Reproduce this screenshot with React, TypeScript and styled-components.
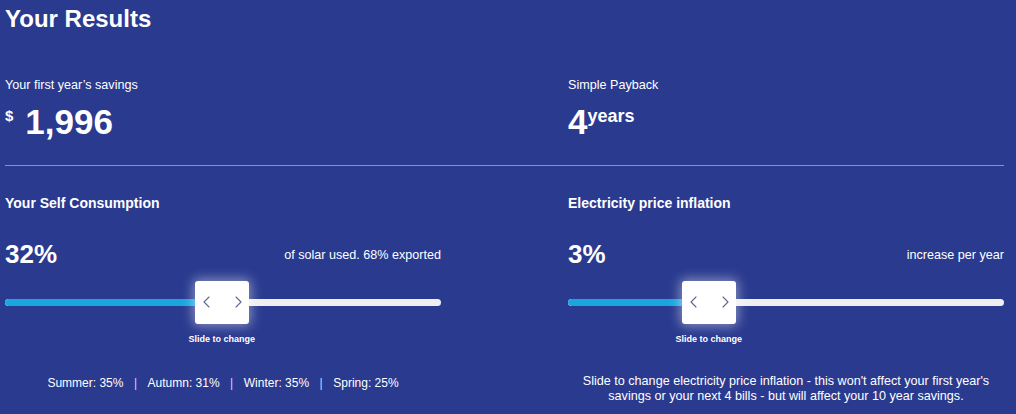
import React from "react";
import styled, { createGlobalStyle } from "styled-components";

const GlobalStyle = createGlobalStyle`
  html, body {
    margin: 0;
    padding: 0;
    background: #2a3a8f;
  }
  body {
    font-family: "Liberation Sans", Arial, sans-serif;
    color: #ffffff;
  }
`;

const Page = styled.div`
  width: 999px;
  padding: 5px 12px 0 5px;
  background: #2a3a8f;
  min-height: 409px;
`;

const Title = styled.h1`
  margin: 0;
  font-size: 24px;
  line-height: 28px;
  font-weight: 700;
`;

const Columns = styled.div<{ $top?: number }>`
  display: grid;
  grid-template-columns: 436px 436px;
  column-gap: 127px;
  margin-top: ${(p) => p.$top ?? 0}px;
`;

const Column = styled.div`
  display: flex;
  flex-direction: column;
`;

const StatLabel = styled.div`
  font-size: 12.6px;
  line-height: 15px;
`;

const StatValueRow = styled.div`
  display: flex;
  align-items: flex-start;
  margin-top: 11px;
`;

const Currency = styled.span`
  font-size: 15px;
  line-height: 15px;
  font-weight: 700;
  margin-top: 4px;
  margin-right: 12px;
`;

const BigNumber = styled.span`
  font-size: 35px;
  line-height: 35px;
  font-weight: 700;
`;

const Unit = styled.span`
  font-size: 18px;
  line-height: 18px;
  font-weight: 700;
  margin-top: 3px;
`;

const Divider = styled.hr`
  margin: 26px 0 0 0;
  border: 0;
  height: 1px;
  background: #8390d2;
  width: 999px;
`;

const SectionHeading = styled.h2`
  margin: 0;
  font-size: 14px;
  line-height: 16px;
  font-weight: 700;
`;

const ValueRow = styled.div`
  display: flex;
  justify-content: space-between;
  align-items: flex-end;
  margin-top: 28px;
`;

const Percent = styled.span`
  font-size: 26px;
  line-height: 30px;
  font-weight: 700;
`;

const ValueNote = styled.span`
  font-size: 12.6px;
  line-height: 15px;
  margin-bottom: 6px;
`;

const SliderArea = styled.div`
  position: relative;
  margin-top: 12px;
  height: 64px;
`;

const Track = styled.div`
  position: absolute;
  left: 0;
  right: 0;
  top: 18px;
  height: 7px;
  border-radius: 4px;
  background: #efeff1;
  overflow: hidden;
`;

const TrackFill = styled.div`
  height: 100%;
  background: #19a6de;
  border-radius: 4px 0 0 4px;
`;

const ThumbGroup = styled.div`
  position: absolute;
  top: 0;
  width: 54px;
  display: flex;
  flex-direction: column;
  align-items: center;
`;

const Thumb = styled.div`
  width: 54px;
  height: 43px;
  box-sizing: border-box;
  background: #ffffff;
  border-radius: 3px;
  box-shadow: 0 0 12px 2px rgba(255, 255, 255, 0.45);
  display: flex;
  align-items: center;
  justify-content: space-between;
  padding: 0 7px 1px 8px;
`;

const Caption = styled.span`
  margin-top: 10px;
  font-size: 9px;
  line-height: 11px;
  font-weight: 700;
  white-space: nowrap;
`;

const SeasonLine = styled.div`
  margin-top: 31px;
  font-size: 12px;
  line-height: 14px;
  text-align: center;
`;

const Sep = styled.span`
  color: #cfd5ee;
  margin: 0 10.5px;
`;

const Description = styled.p`
  margin: 29px 0 0 0;
  font-size: 12.6px;
  line-height: 15px;
  text-align: center;
  padding: 0 12px;
`;

const Chevron = ({ dir }: { dir: "left" | "right" }) => (
  <svg width="7" height="12" viewBox="0 0 7 12" fill="none">
    <path
      d={dir === "left" ? "M6 1 L1 6 L6 11" : "M1 1 L6 6 L1 11"}
      stroke="#5d6790"
      strokeWidth="1.1"
      strokeLinecap="round"
      strokeLinejoin="round"
    />
  </svg>
);

const Slider = ({ position }: { position: number }) => {
  const left = `calc((100% - 54px) * ${position})`;
  return (
    <SliderArea>
      <Track>
        <TrackFill style={{ width: `calc(${left} + 4px)` }} />
      </Track>
      <ThumbGroup style={{ left }}>
        <Thumb>
          <Chevron dir="left" />
          <Chevron dir="right" />
        </Thumb>
        <Caption>Slide to change</Caption>
      </ThumbGroup>
    </SliderArea>
  );
};

const seasons = [
  ["Summer", "35%"],
  ["Autumn", "31%"],
  ["Winter", "35%"],
  ["Spring", "25%"],
];

export default function App() {
  return (
    <>
      <GlobalStyle />
      <Page>
        <Title>Your Results</Title>
        <Columns $top={45}>
          <Column>
            <StatLabel>Your first year’s savings</StatLabel>
            <StatValueRow>
              <Currency>$</Currency>
              <BigNumber>1,996</BigNumber>
            </StatValueRow>
          </Column>
          <Column>
            <StatLabel>Simple Payback</StatLabel>
            <StatValueRow>
              <BigNumber>4</BigNumber>
              <Unit>years</Unit>
            </StatValueRow>
          </Column>
        </Columns>
        <Divider />
        <Columns $top={29}>
          <Column>
            <SectionHeading>Your Self Consumption</SectionHeading>
            <ValueRow>
              <Percent>32%</Percent>
              <ValueNote>of solar used. 68% exported</ValueNote>
            </ValueRow>
            <Slider position={0.497} />
            <SeasonLine>
              {seasons.map(([name, value], i) => (
                <React.Fragment key={name}>
                  {i > 0 && <Sep>|</Sep>}
                  {name}: {value}
                </React.Fragment>
              ))}
            </SeasonLine>
          </Column>
          <Column>
            <SectionHeading>Electricity price inflation</SectionHeading>
            <ValueRow>
              <Percent>3%</Percent>
              <ValueNote>increase per year</ValueNote>
            </ValueRow>
            <Slider position={0.298} />
            <Description>
              Slide to change electricity price inflation - this won't affect your first year's savings or your
              next 4 bills - but will affect your 10 year savings.
            </Description>
          </Column>
        </Columns>
      </Page>
    </>
  );
}
